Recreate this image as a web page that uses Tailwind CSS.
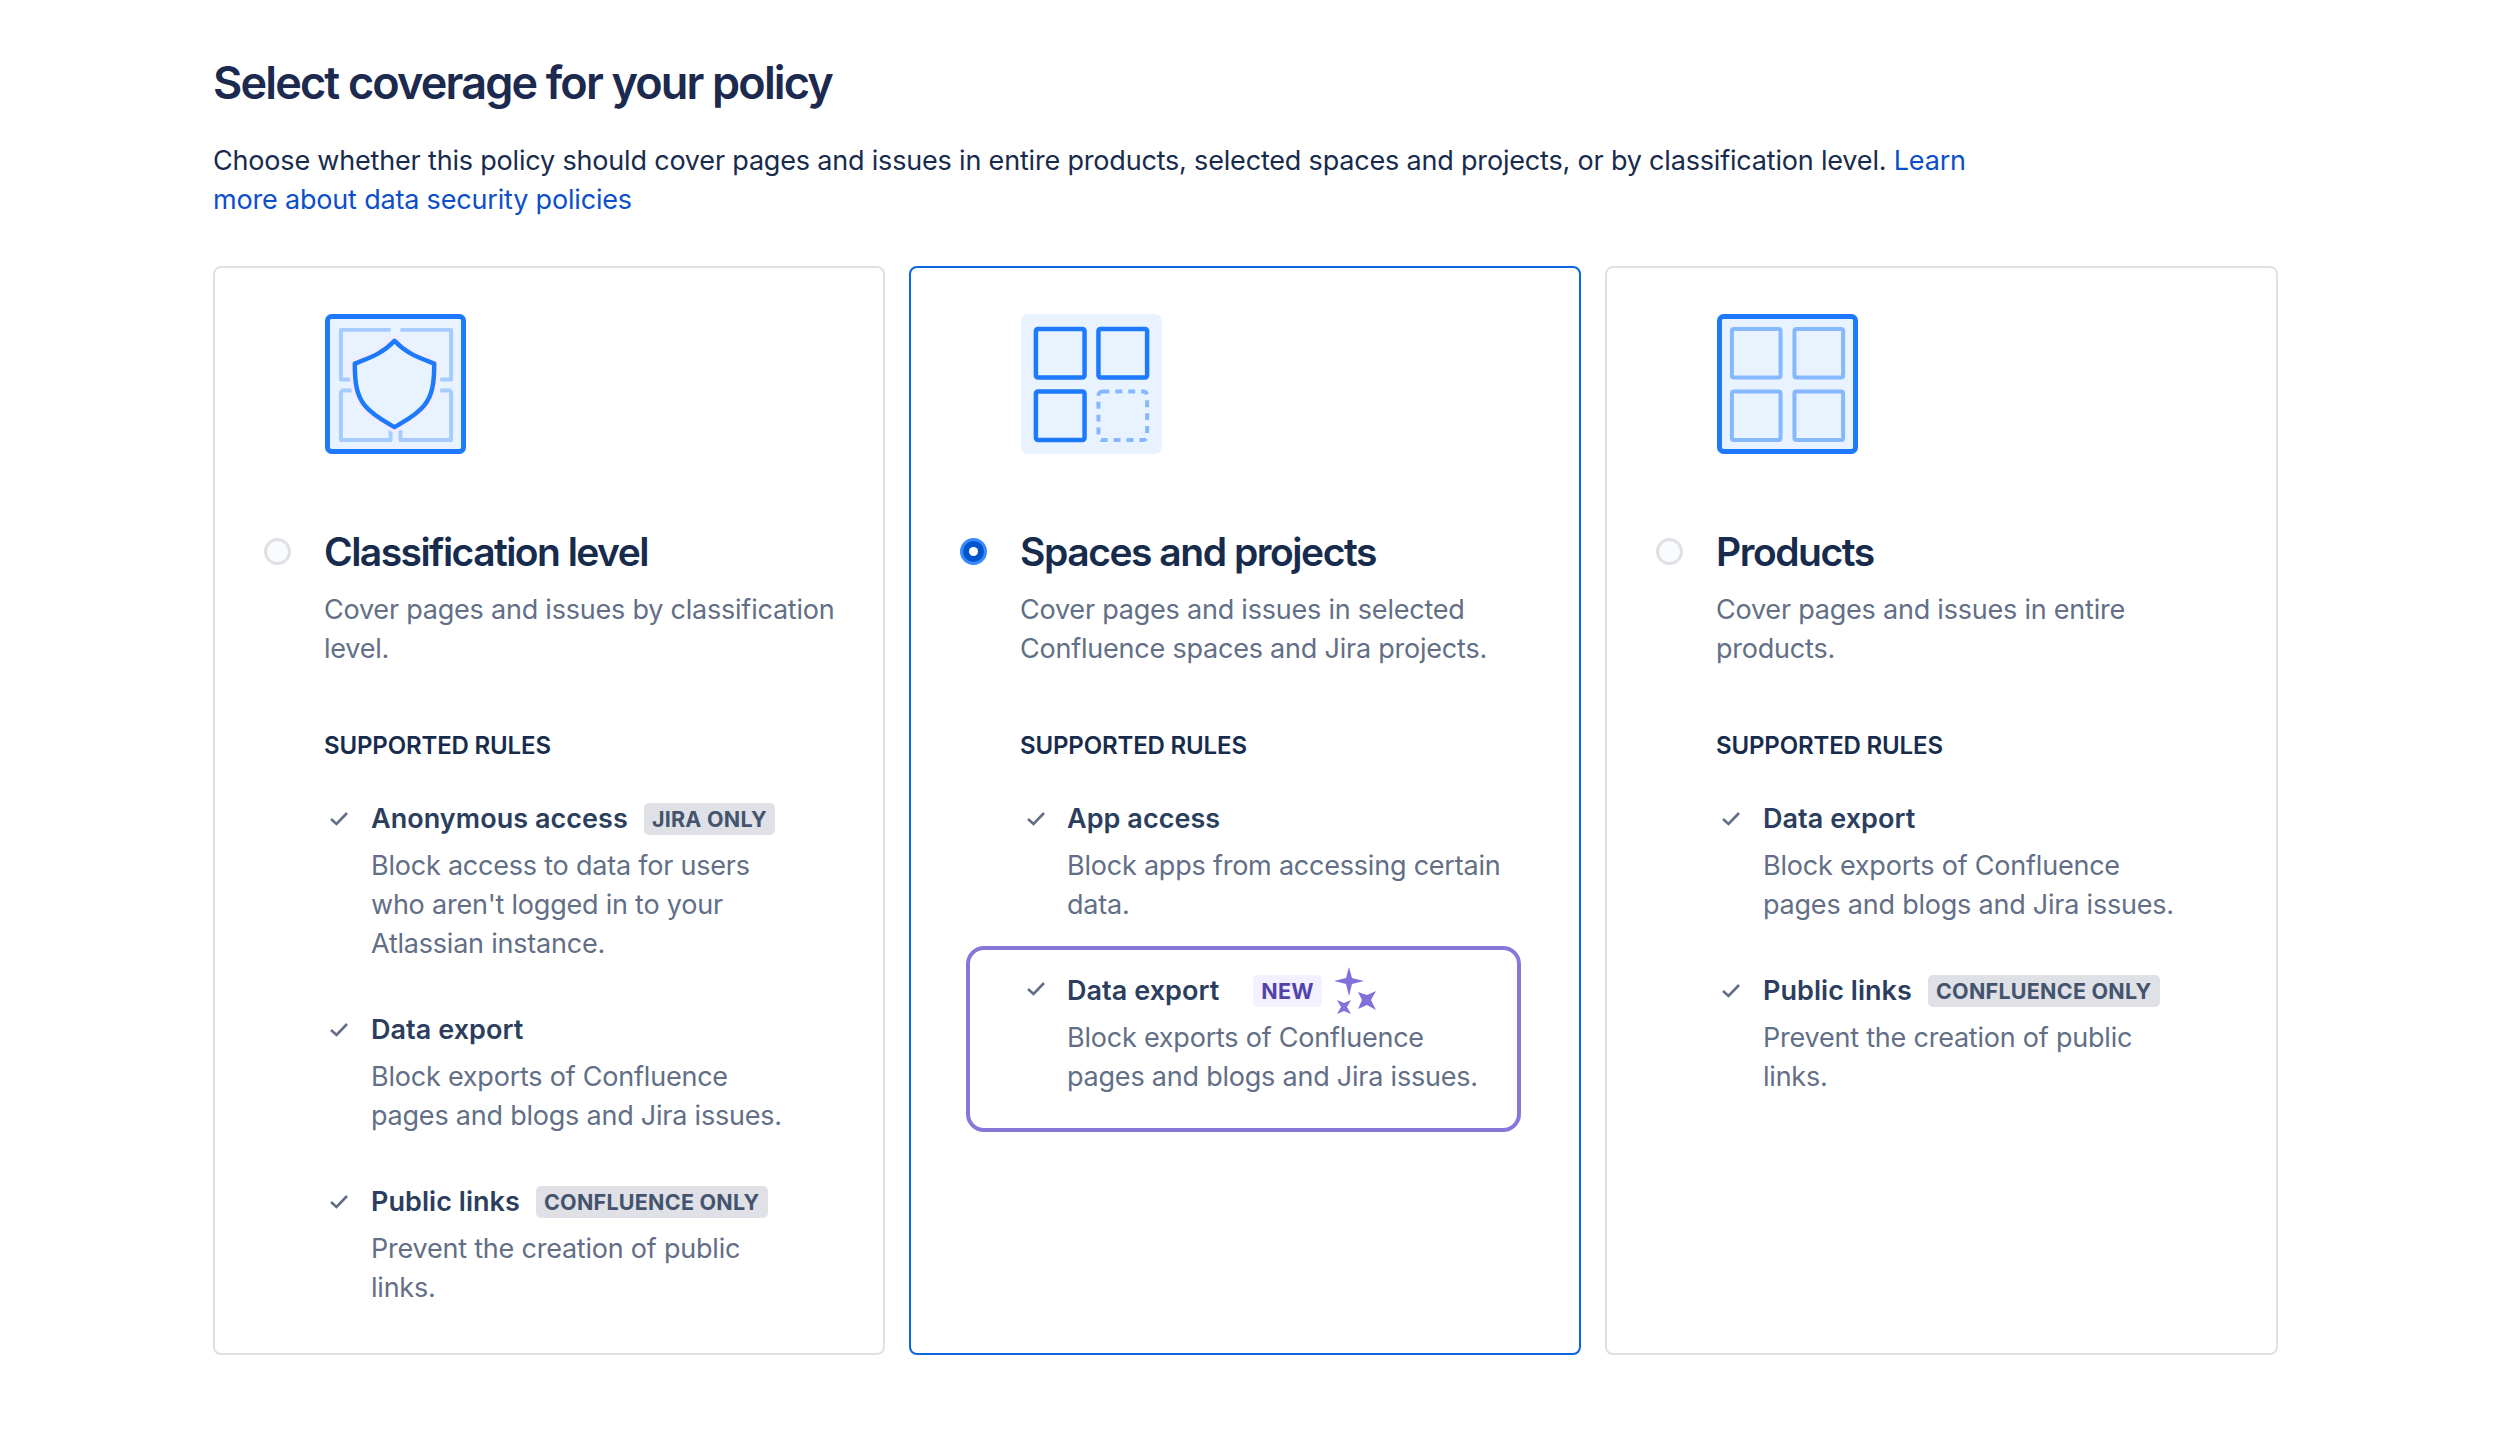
<!DOCTYPE html>
<html lang="en">
<head>
  <meta charset="UTF-8">
  <title>Select coverage for your policy</title>
  <script src="https://cdn.jsdelivr.net/npm/@tailwindcss/browser@4"></script>
</head>
<body class="bg-white font-['Inter',sans-serif] text-[#172b4d]">
  <main class="w-[2500px] pl-[213px] pr-[222px] pt-[52px]">
    <h1 class="text-[45px] leading-[62px] font-semibold tracking-[-1.83px] text-[#1b2a4e]">Select coverage for your policy</h1>
    <p class="mt-[27px] w-[1800px] text-[27px] leading-[39px] tracking-[-0.185px]">Choose whether this policy should cover pages and issues in entire products, selected spaces and projects, or by classification level. <a href="#" class="text-[#0c4fc9]">Learn more about data security policies</a></p>

    <div class="mt-[47px] grid grid-cols-[672px_672px_673px] gap-[24px] h-[1089px]">

      <!-- Classification level -->
      <section class="rounded-[8px] border-2 border-[#dfe1e6] pl-[109px] pr-[30px] pt-[46px]">
        <svg class="block ml-[1px]" width="141" height="140" viewBox="0 0 142 141" fill="none">
          <rect x="2.5" y="2.5" width="137" height="136" rx="4" fill="#e9f2ff" stroke="#1d7afc" stroke-width="5"/>
          <path d="M66 16H16V66H27M76 16H127V66H116M16 77V127H66V117M127 77V127H76V117M16 77H27M127 77H116" stroke="#a6ccff" stroke-width="4" stroke-linejoin="round"/>
          <path d="M70 27C82 40 95 44 110 50C110 70 108 82 100 92C92 102 80 108 70 114C60 108 48 102 40 92C32 82 30 70 30 50C45 44 58 40 70 27Z" fill="#e9f2ff" stroke="#f3ecff" stroke-width="11" stroke-linejoin="round"/>
          <path d="M70 27C82 40 95 44 110 50C110 70 108 82 100 92C92 102 80 108 70 114C60 108 48 102 40 92C32 82 30 70 30 50C45 44 58 40 70 27Z" fill="#e9f2ff" stroke="#1d7afc" stroke-width="4.5" stroke-linejoin="round"/>
        </svg>
        <div class="relative mt-[73px]">
          <span class="absolute left-[-60px] top-[11px] w-[27px] h-[27px] rounded-full border-[3px] border-[#dfe1e6] bg-[#fafbfc]"></span>
          <h2 class="text-[39px] leading-[50px] font-semibold tracking-[-1.55px]">Classification level</h2>
        </div>
        <p class="mt-[13px] text-[27px] leading-[39px] tracking-[-0.22px] text-[#626f86]">Cover pages and issues by classification level.</p>
        <h3 class="mt-[62px] text-[24px] leading-[32px] font-semibold tracking-[-0.15px]">SUPPORTED RULES</h3>
        <ul class="mt-[37px]">
          <li class="relative pl-[47px]">
            <svg class="absolute left-[5px] top-[12px]" width="20" height="15" viewBox="0 0 20 15" fill="none"><path d="M2 8L7.5 13L18 2" stroke="#626f86" stroke-width="2.6"/></svg>
            <div class="flex items-center gap-[16px] h-[40px]"><span class="text-[27px] font-semibold tracking-[0.05px] text-[#2c3e5d]">Anonymous access</span><span class="rounded-[5px] bg-[#dfe1e6] px-[8px] h-[32px] leading-[32px] text-[21.5px] font-bold tracking-[0.25px] text-[#44546f]">JIRA ONLY</span></div>
            <p class="mt-[7px] text-[27px] leading-[39px] tracking-[-0.22px] text-[#626f86]">Block access to data for users<br>who aren't logged in to your<br>Atlassian instance.</p>
          </li>
          <li class="relative pl-[47px] mt-[47px]">
            <svg class="absolute left-[5px] top-[12px]" width="20" height="15" viewBox="0 0 20 15" fill="none"><path d="M2 8L7.5 13L18 2" stroke="#626f86" stroke-width="2.6"/></svg>
            <div class="flex items-center gap-[16px] h-[40px]"><span class="text-[27px] font-semibold tracking-[0.05px] text-[#2c3e5d]">Data export</span></div>
            <p class="mt-[7px] text-[27px] leading-[39px] tracking-[-0.22px] text-[#626f86]">Block exports of Confluence<br>pages and blogs and Jira issues.</p>
          </li>
          <li class="relative pl-[47px] mt-[47px]">
            <svg class="absolute left-[5px] top-[12px]" width="20" height="15" viewBox="0 0 20 15" fill="none"><path d="M2 8L7.5 13L18 2" stroke="#626f86" stroke-width="2.6"/></svg>
            <div class="flex items-center gap-[16px] h-[40px]"><span class="text-[27px] font-semibold tracking-[0.05px] text-[#2c3e5d]">Public links</span><span class="rounded-[5px] bg-[#dfe1e6] px-[8px] h-[32px] leading-[32px] text-[21.5px] font-bold tracking-[0.25px] text-[#44546f]">CONFLUENCE ONLY</span></div>
            <p class="mt-[7px] text-[27px] leading-[39px] tracking-[-0.22px] text-[#626f86]">Prevent the creation of public<br>links.</p>
          </li>
        </ul>
      </section>

      <!-- Spaces and projects -->
      <section class="rounded-[8px] border-2 border-[#0c66e4] pl-[109px] pr-[30px] pt-[46px]">
        <svg class="block ml-[1px]" width="141" height="140" viewBox="0 0 142 141" fill="none">
          <rect width="142" height="141" rx="7" fill="#e9f2ff"/>
          <g stroke="#1d7afc" stroke-width="4.5">
            <rect x="15" y="15" width="49" height="49" rx="2"/>
            <rect x="78" y="15" width="49" height="49" rx="2"/>
            <rect x="15" y="78" width="49" height="49" rx="2"/>
          </g>
          <rect x="78" y="78" width="49" height="49" rx="4" stroke="#85b8ff" stroke-width="4" stroke-dasharray="7 6"/>
        </svg>
        <div class="relative mt-[73px]">
          <span class="absolute left-[-60px] top-[11px] flex items-center justify-center w-[27px] h-[27px] rounded-full border-[3px] border-[#388bff] bg-[#0055cc]"><span class="w-[9px] h-[9px] rounded-full bg-white"></span></span>
          <h2 class="text-[39px] leading-[50px] font-semibold tracking-[-1.45px]">Spaces and projects</h2>
        </div>
        <p class="mt-[13px] text-[27px] leading-[39px] tracking-[-0.22px] text-[#626f86]">Cover pages and issues in selected Confluence spaces and Jira projects.</p>
        <h3 class="mt-[62px] text-[24px] leading-[32px] font-semibold tracking-[-0.15px]">SUPPORTED RULES</h3>
        <ul class="mt-[37px]">
          <li class="relative pl-[47px]">
            <svg class="absolute left-[6px] top-[12px]" width="20" height="15" viewBox="0 0 20 15" fill="none"><path d="M2 8L7.5 13L18 2" stroke="#626f86" stroke-width="2.6"/></svg>
            <div class="flex items-center gap-[16px] h-[40px]"><span class="text-[27px] font-semibold tracking-[0.05px] text-[#2c3e5d]">App access</span></div>
            <p class="mt-[7px] text-[27px] leading-[39px] tracking-[-0.22px] text-[#626f86]">Block apps from accessing certain data.</p>
          </li>
          <li class="relative mt-[22px] ml-[-54px] w-[555px] h-[186px] rounded-[18px] border-[4px] border-[#8777d9] pl-[97px] pt-[21px]">
            <svg class="absolute left-[56px] top-[31px]" width="20" height="15" viewBox="0 0 20 15" fill="none"><path d="M2 8L7.5 13L18 2" stroke="#626f86" stroke-width="2.6"/></svg>
            <div class="flex items-center h-[40px]"><span class="text-[27px] font-semibold tracking-[0.05px] text-[#2c3e5d]">Data export</span><span class="ml-[34px] rounded-[5px] bg-[#f3f0ff] px-[8px] h-[32px] leading-[32px] text-[21.5px] font-bold tracking-[0.25px] text-[#5243aa]">NEW</span>
              <svg class="ml-[12px]" width="42" height="48" viewBox="0 0 42 48" fill="#8270db"><path d="M15 0L18 11L30 14L18 17L15 29L12 17L0 14L12 11Z"/><path d="M42 24L37 33L42 43L33 38L24 42L28 33L24 25L33 28Z"/><path d="M17 33L13 40L17 47L10 44L3 47L7 40L3 33L10 36Z"/></svg>
            </div>
            <p class="mt-[7px] text-[27px] leading-[39px] tracking-[-0.22px] text-[#626f86]">Block exports of Confluence<br>pages and blogs and Jira issues.</p>
          </li>
        </ul>
      </section>

      <!-- Products -->
      <section class="rounded-[8px] border-2 border-[#dfe1e6] pl-[109px] pr-[30px] pt-[46px]">
        <svg class="block ml-[1px]" width="141" height="140" viewBox="0 0 142 141" fill="none">
          <rect x="2.5" y="2.5" width="137" height="136" rx="4" fill="#e9f2ff" stroke="#1d7afc" stroke-width="5"/>
          <g stroke="#85b8ff" stroke-width="4">
            <rect x="15" y="15" width="49" height="49" rx="2"/>
            <rect x="78" y="15" width="49" height="49" rx="2"/>
            <rect x="15" y="78" width="49" height="49" rx="2"/>
            <rect x="78" y="78" width="49" height="49" rx="2"/>
          </g>
        </svg>
        <div class="relative mt-[73px]">
          <span class="absolute left-[-60px] top-[11px] w-[27px] h-[27px] rounded-full border-[3px] border-[#dfe1e6] bg-[#fafbfc]"></span>
          <h2 class="text-[39px] leading-[50px] font-semibold tracking-[-1.45px]">Products</h2>
        </div>
        <p class="mt-[13px] text-[27px] leading-[39px] tracking-[-0.22px] text-[#626f86]">Cover pages and issues in entire products.</p>
        <h3 class="mt-[62px] text-[24px] leading-[32px] font-semibold tracking-[-0.15px]">SUPPORTED RULES</h3>
        <ul class="mt-[37px]">
          <li class="relative pl-[47px]">
            <svg class="absolute left-[5px] top-[12px]" width="20" height="15" viewBox="0 0 20 15" fill="none"><path d="M2 8L7.5 13L18 2" stroke="#626f86" stroke-width="2.6"/></svg>
            <div class="flex items-center gap-[16px] h-[40px]"><span class="text-[27px] font-semibold tracking-[0.05px] text-[#2c3e5d]">Data export</span></div>
            <p class="mt-[7px] text-[27px] leading-[39px] tracking-[-0.22px] text-[#626f86]">Block exports of Confluence<br>pages and blogs and Jira issues.</p>
          </li>
          <li class="relative pl-[47px] mt-[47px]">
            <svg class="absolute left-[5px] top-[12px]" width="20" height="15" viewBox="0 0 20 15" fill="none"><path d="M2 8L7.5 13L18 2" stroke="#626f86" stroke-width="2.6"/></svg>
            <div class="flex items-center gap-[16px] h-[40px]"><span class="text-[27px] font-semibold tracking-[0.05px] text-[#2c3e5d]">Public links</span><span class="rounded-[5px] bg-[#dfe1e6] px-[8px] h-[32px] leading-[32px] text-[21.5px] font-bold tracking-[0.25px] text-[#44546f]">CONFLUENCE ONLY</span></div>
            <p class="mt-[7px] text-[27px] leading-[39px] tracking-[-0.22px] text-[#626f86]">Prevent the creation of public<br>links.</p>
          </li>
        </ul>
      </section>
    </div>
  </main>
</body>
</html>
